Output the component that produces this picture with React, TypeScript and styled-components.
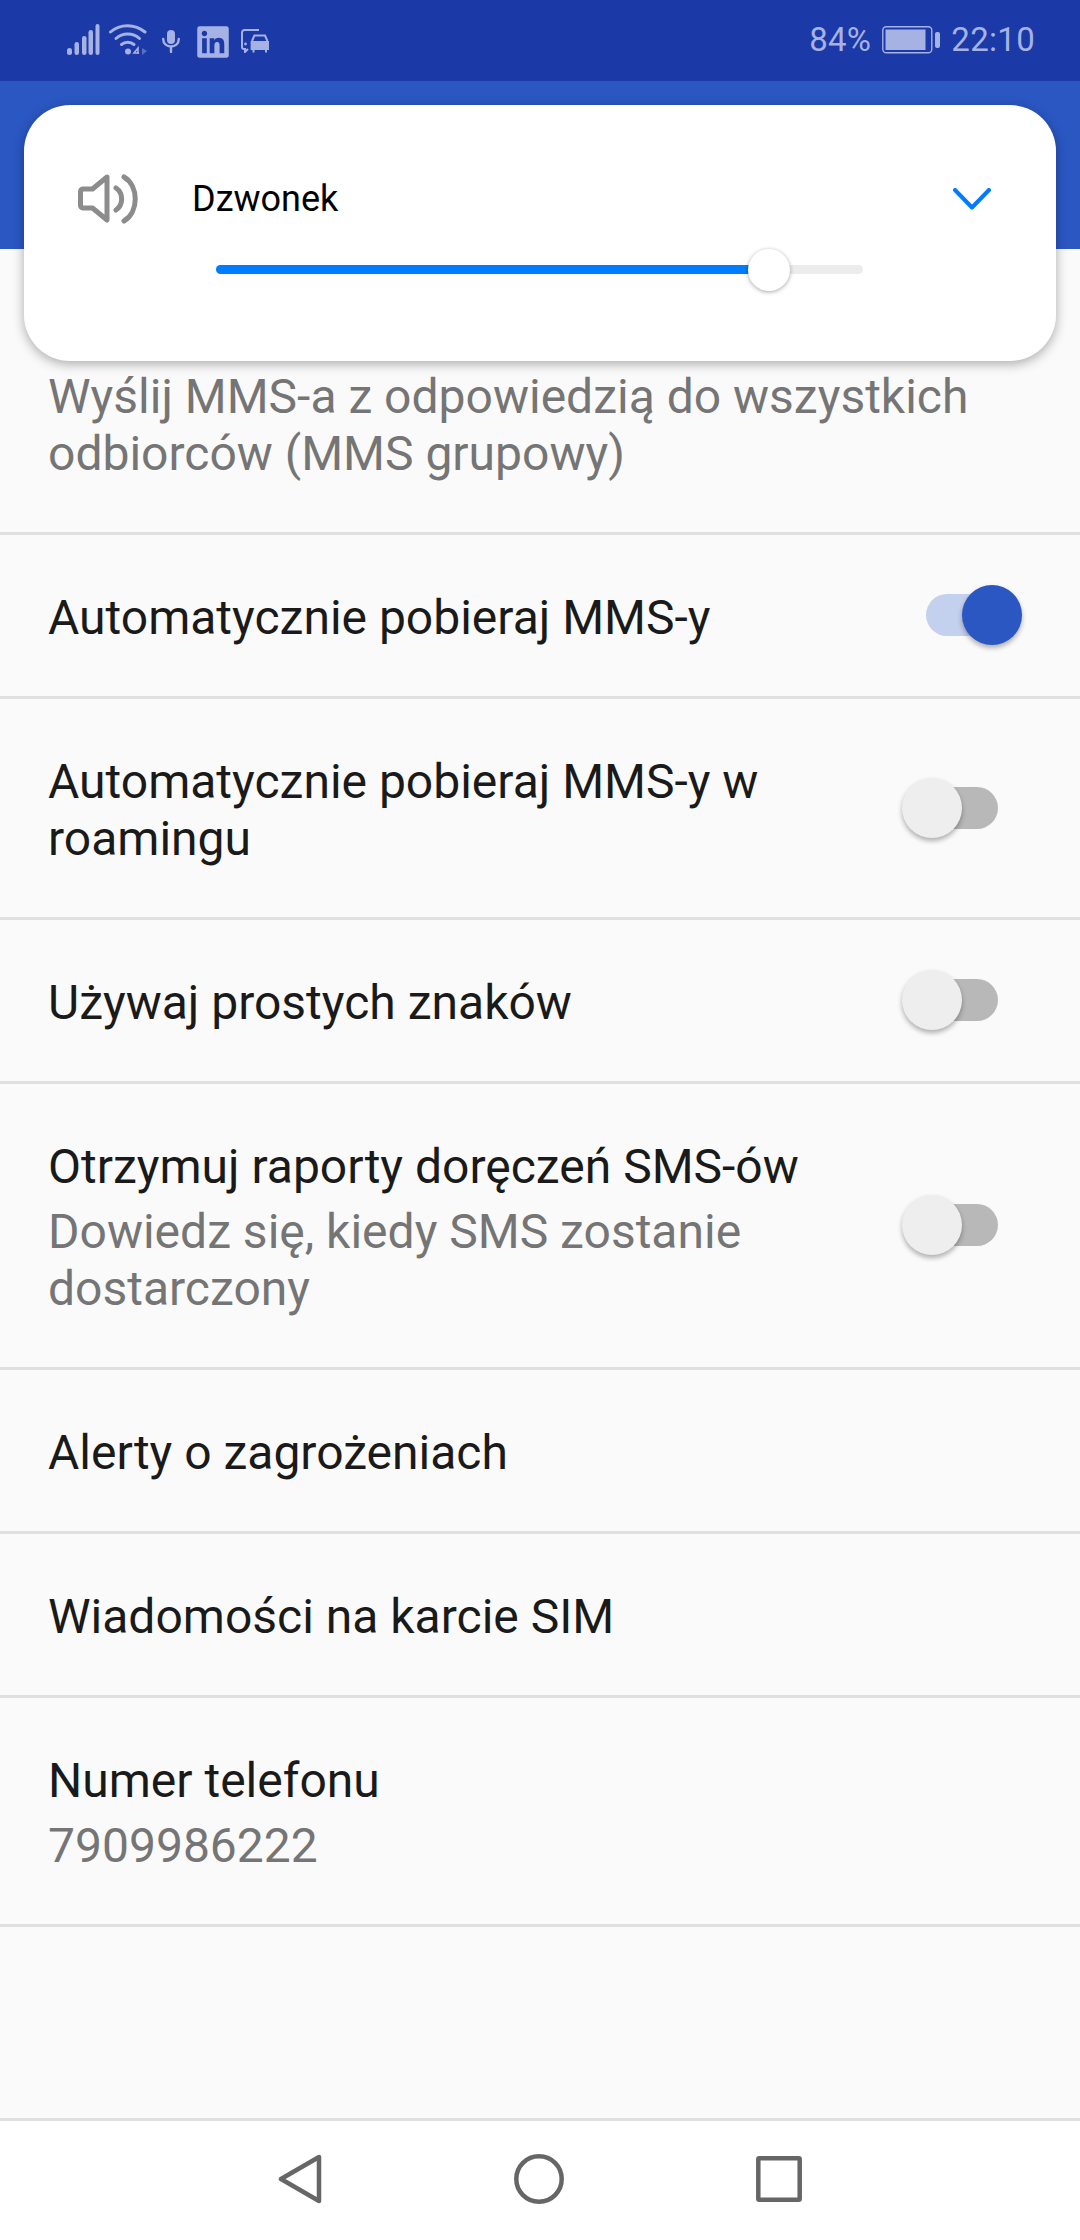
import { createGlobalStyle, styled } from 'styled-components'
import { FaLinkedin } from 'react-icons/fa'

const GlobalStyle = createGlobalStyle`
	html, body {
		margin: 0;
		padding: 0;
		background: #fafafa;
	}
	body {
		font-family: Roboto, 'Liberation Sans', sans-serif;
		-webkit-font-smoothing: antialiased;
	}
`

const Screen = styled.div`
	position: relative;
	display: flex;
	flex-direction: column;
	width: 1080px;
	height: 2240px;
	overflow: hidden;
	background: #fafafa;
`

const StatusBar = styled.div`
	display: flex;
	align-items: center;
	justify-content: space-between;
	flex: 0 0 81px;
	padding: 0 45px 2px 67px;
	box-sizing: border-box;
	background: #1c39a8;
	color: #a6b2e3;
`

const StatusGroup = styled.div`
	display: flex;
	align-items: center;
`

const StatusText = styled.span`
	font-size: 33px;
	line-height: 40px;
	letter-spacing: 0.3px;
`

const AppBar = styled.div`
	flex: 0 0 168px;
	background: #2b57c3;
`

const VolumePanel = styled.div`
	position: absolute;
	top: 105px;
	left: 24px;
	width: 1032px;
	height: 256px;
	box-sizing: border-box;
	padding-top: 69px;
	border-radius: 46px;
	background: #fff;
	box-shadow: 0 3px 12px rgba(0, 0, 0, 0.32);
`

const PanelHead = styled.div`
	display: flex;
	align-items: center;
	height: 50px;
	padding: 0 65px 0 54px;
`

const PanelLabel = styled.span`
	flex: 1;
	margin-left: 54px;
	font-size: 36px;
	line-height: 50px;
	color: #000;
`

const Slider = styled.div`
	position: relative;
	height: 9px;
	margin: 41px 193px 0 192px;
	border-radius: 5px;
	background: #ececec;
`

const SliderFill = styled.div<{ $value: number }>`
	width: ${(p) => p.$value}%;
	height: 100%;
	border-radius: 5px;
	background: #007dff;
`

const SliderThumb = styled.div<{ $value: number }>`
	position: absolute;
	top: 50%;
	left: ${(p) => p.$value}%;
	width: 42px;
	height: 42px;
	border-radius: 50%;
	background: #fff;
	transform: translate(-50%, -50%);
	box-shadow: 0 1px 4px rgba(0, 0, 0, 0.35);
`

const List = styled.div`
	flex: 1;
	display: flex;
	flex-direction: column;
`

const Row = styled.div<{ $clipped?: boolean }>`
	display: flex;
	align-items: center;
	justify-content: space-between;
	padding: ${(p) => (p.$clipped ? '119px 58px 50px 48px' : '52px 58px 52px 48px')};
	border-bottom: 3px solid #e0e0e0;
`

const RowText = styled.div`
	flex: 1;
	min-width: 0;
	max-width: 800px;
	margin: 2px 0 -2px;
`

const Title = styled.div`
	font-size: 48px;
	line-height: 57px;
	color: #1a1a1a;
`

const Summary = styled.div<{ $first?: boolean }>`
	margin-top: ${(p) => (p.$first ? 0 : 8)}px;
	font-size: 48px;
	line-height: 57px;
	color: #757575;
`

const WideSummary = styled(Summary)`
	width: 980px;
`

const Switch = styled.div`
	position: relative;
	flex: 0 0 120px;
	height: 57px;
`

const SwitchTrack = styled.div<{ $on: boolean }>`
	position: absolute;
	top: 7px;
	left: 24px;
	width: 72px;
	height: 42px;
	border-radius: 21px;
	background: ${(p) => (p.$on ? '#c3d0ee' : '#b8b8b8')};
`

const SwitchThumb = styled.div<{ $on: boolean }>`
	position: absolute;
	top: -2px;
	left: ${(p) => (p.$on ? '60px' : '0')};
	width: 60px;
	height: 60px;
	border-radius: 50%;
	background: ${(p) => (p.$on ? '#2b57c3' : '#eeeeee')};
	box-shadow: 0 3px 5px rgba(0, 0, 0, 0.3);
`

const NavBar = styled.div`
	display: flex;
	align-items: center;
	justify-content: center;
	gap: 192px;
	flex: 0 0 122px;
	padding-bottom: 3px;
	box-sizing: border-box;
	background: #fff;
	border-top: 3px solid #e0e0e0;
`

const SignalIcon = () => (
	<svg width="33" height="31" viewBox="0 0 33 31" fill="currentColor">
		<rect x="0" y="24" width="5" height="7" rx="2.5" />
		<rect x="7.5" y="18" width="4.5" height="13" rx="2.2" />
		<rect x="15" y="12" width="4.5" height="19" rx="2.2" />
		<rect x="21.5" y="6" width="4.5" height="25" rx="2.2" />
		<rect x="28.5" y="0" width="4" height="31" rx="2" />
	</svg>
)

const WifiIcon = () => (
	<svg width="38" height="32" viewBox="0 0 38 32" fill="none" stroke="currentColor" strokeWidth="3" strokeLinecap="round" style={{ marginLeft: 9 }}>
		<path d="M1.5 8 C11 -0.5 26 -0.5 36 8" />
		<path d="M7 14.5 C13.5 8.5 24 8.5 30.5 14.5" />
		<path d="M12.5 20.5 C16 17.5 21.5 17.5 25 20.5" />
		<circle cx="19" cy="27.5" r="3" fill="currentColor" stroke="none" />
		<path d="M29 30 V24 L25 29 H30" strokeWidth="1.6" strokeLinecap="butt" />
		<path d="M33 24 V31 L38 27 Z" fill="currentColor" stroke="none" opacity="0.45" />
	</svg>
)

const MicIcon = () => (
	<svg width="18" height="23" viewBox="0 0 18 23" fill="none" stroke="currentColor" strokeWidth="2.4" strokeLinecap="round" style={{ margin: '4px 0 0 15px' }}>
		<rect x="5" y="0" width="8" height="14" rx="4" fill="currentColor" stroke="none" />
		<path d="M1.2 9 C1.2 19 16.8 19 16.8 9" />
		<path d="M9 17 V22" />
	</svg>
)

const LinkedInIcon = styled(FaLinkedin)`
	width: 36px;
	height: 36px;
	margin: 4px 0 0 15px;
`

const CarChatIcon = () => (
	<svg width="29" height="24" viewBox="0 0 29 24" fill="none" stroke="currentColor" strokeWidth="2" style={{ margin: '3px 0 0 10px' }}>
		<path d="M18 1 H3.5 A2.5 2.5 0 0 0 1 3.5 V18 A2 2 0 0 0 3 20 H4 V23 L7 20" />
		<circle cx="4.5" cy="15" r="1.4" fill="currentColor" stroke="none" />
		<path d="M11 12 L13.4 6.5 H24 L26.4 12" />
		<path d="M9.6 12 H28 V21 H26 V23.5 H24 V21 H13.5 V23.5 H11.5 V21 H9.6 Z" fill="currentColor" stroke="none" />
	</svg>
)

const BatteryIcon = () => (
	<svg width="59" height="28" viewBox="0 0 59 28" style={{ margin: '0 10px 0 11px' }}>
		<rect x="0.8" y="0.8" width="49" height="26" rx="3.5" fill="none" stroke="currentColor" strokeWidth="1.4" />
		<rect x="3.5" y="3.5" width="40" height="20.5" fill="currentColor" />
		<rect x="53" y="6" width="5" height="16" rx="2" fill="currentColor" />
	</svg>
)

const SpeakerIcon = () => (
	<svg width="60" height="50" viewBox="0 0 60 50" fill="none" stroke="#8c8c8c" strokeWidth="5" strokeLinejoin="round" strokeLinecap="round">
		<path d="M29 3 L14.5 15 H5 A3 3 0 0 0 2.5 18 V31 A3 3 0 0 0 5 34 H14.5 L29 46 Z" />
		<path d="M38 14 C45.5 19 45.5 31 38 36" />
		<path d="M46 3 C61 12 61 38 46 47" />
	</svg>
)

const ChevronIcon = () => (
	<svg width="38" height="22" viewBox="0 0 38 22" fill="none" stroke="#007dff" strokeWidth="4" strokeLinecap="round" strokeLinejoin="round">
		<path d="M2 2 L19 19.5 L36 2" />
	</svg>
)

const BackIcon = () => (
	<svg width="44" height="50" viewBox="0 0 44 50" fill="none" stroke="#666" strokeWidth="4.5" strokeLinejoin="round">
		<path d="M41 3 V47 L3 25 Z" />
	</svg>
)

const HomeIcon = () => (
	<svg width="50" height="50" viewBox="0 0 50 50" fill="none" stroke="#666" strokeWidth="4.5">
		<circle cx="25" cy="25" r="22.7" />
	</svg>
)

const RecentsIcon = () => (
	<svg width="46" height="46" viewBox="0 0 46 46" fill="none" stroke="#666" strokeWidth="4.5" strokeLinejoin="round">
		<rect x="2.3" y="2.3" width="41.4" height="41.4" rx="1" />
	</svg>
)

const Toggle = ({ on }: { on: boolean }) => (
	<Switch>
		<SwitchTrack $on={on} />
		<SwitchThumb $on={on} />
	</Switch>
)

const VOLUME = 85.5

export default function App() {
	return (
		<Screen>
			<GlobalStyle />
			<StatusBar>
				<StatusGroup>
					<SignalIcon />
					<WifiIcon />
					<MicIcon />
					<LinkedInIcon />
					<CarChatIcon />
				</StatusGroup>
				<StatusGroup>
					<StatusText>84%</StatusText>
					<BatteryIcon />
					<StatusText>22:10</StatusText>
				</StatusGroup>
			</StatusBar>
			<AppBar />
			<List>
				<Row $clipped>
					<WideSummary $first>Wyślij MMS-a z odpowiedzią do wszystkich odbiorców (MMS grupowy)</WideSummary>
				</Row>
				<Row>
					<RowText>
						<Title>Automatycznie pobieraj MMS-y</Title>
					</RowText>
					<Toggle on />
				</Row>
				<Row>
					<RowText>
						<Title>Automatycznie pobieraj MMS-y w roamingu</Title>
					</RowText>
					<Toggle on={false} />
				</Row>
				<Row>
					<RowText>
						<Title>Używaj prostych znaków</Title>
					</RowText>
					<Toggle on={false} />
				</Row>
				<Row>
					<RowText>
						<Title>Otrzymuj raporty doręczeń SMS-ów</Title>
						<Summary>Dowiedz się, kiedy SMS zostanie dostarczony</Summary>
					</RowText>
					<Toggle on={false} />
				</Row>
				<Row>
					<RowText>
						<Title>Alerty o zagrożeniach</Title>
					</RowText>
				</Row>
				<Row>
					<RowText>
						<Title>Wiadomości na karcie SIM</Title>
					</RowText>
				</Row>
				<Row>
					<RowText>
						<Title>Numer telefonu</Title>
						<Summary>7909986222</Summary>
					</RowText>
				</Row>
			</List>
			<NavBar>
				<BackIcon />
				<HomeIcon />
				<RecentsIcon />
			</NavBar>
			<VolumePanel>
				<PanelHead>
					<SpeakerIcon />
					<PanelLabel>Dzwonek</PanelLabel>
					<ChevronIcon />
				</PanelHead>
				<Slider>
					<SliderFill $value={VOLUME} />
					<SliderThumb $value={VOLUME} />
				</Slider>
			</VolumePanel>
		</Screen>
	)
}
